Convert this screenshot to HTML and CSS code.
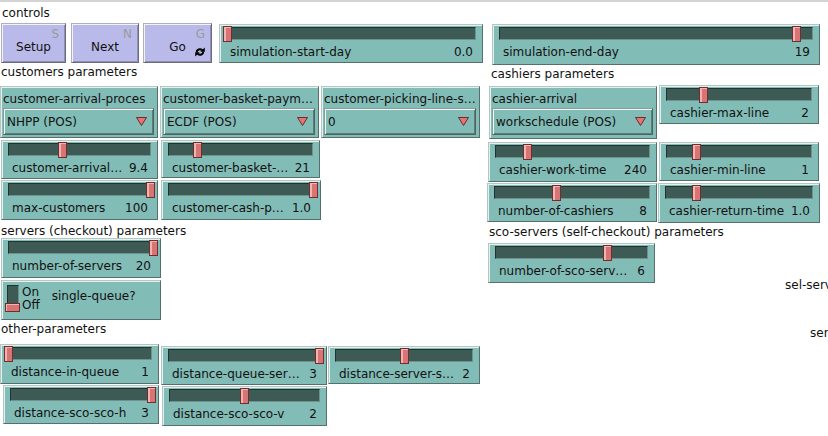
FILE: index.html
```html
<!DOCTYPE html>
<html lang="en">
<head>
    <meta charset="UTF-8">
    <title>Interface</title>
    <link rel="stylesheet" href="styles.css">
</head>
<body>
    <div class="iface">
        <!-- notes -->
        <div class="note n-controls">controls</div>
        <div class="note n-customers">customers parameters</div>
        <div class="note n-cashiers">cashiers parameters</div>
        <div class="note n-servers">servers (checkout) parameters</div>
        <div class="note n-sco">sco-servers (self-checkout) parameters</div>
        <div class="note n-other">other-parameters</div>
        <div class="note n-sel">sel-servers</div>
        <div class="note n-ser">servers</div>

        <!-- buttons -->
        <div class="button w-setup"><span class="key">S</span>Setup</div>
        <div class="button w-next"><span class="key">N</span>Next</div>
        <div class="button w-go">
            <span class="key">G</span>Go
            <svg class="forever" viewBox="0 0 10 10" width="10" height="10">
                <path d="M1.8 5.4 C1.6 2.6 5 1.2 7.4 3.2" stroke="#000" stroke-width="2" fill="none"/>
                <polygon points="5.2,4.8 9.8,4.8 9.8,0.4" fill="#000"/>
                <path d="M8.2 4.6 C8.4 7.4 5 8.8 2.6 6.8" stroke="#000" stroke-width="2" fill="none"/>
                <polygon points="4.8,5.2 0.2,5.2 0.2,9.6" fill="#000"/>
            </svg>
        </div>

        <div class="widget slider w-start-day">
            <div class="track"><span class="thumb" style="--v: 0"></span></div>
            <div class="readout"><span>simulation-start-day</span><span>0.0</span></div>
        </div>
        <div class="widget slider w-end-day">
            <div class="track"><span class="thumb" style="--v: 0.95"></span></div>
            <div class="readout"><span>simulation-end-day</span><span>19</span></div>
        </div>

        <!-- customers -->
        <div class="widget chooser w-arrival-proc">
            <div class="chooser-name">customer-arrival-proces</div>
            <div class="choice"><span>NHPP (POS)</span><svg class="arrow" viewBox="0 0 11 9" width="11" height="9"><polygon points="0.5,0.5 10.5,0.5 5.5,8.5"/></svg></div>
        </div>
        <div class="widget chooser w-basket-pay">
            <div class="chooser-name">customer-basket-paym…</div>
            <div class="choice"><span>ECDF (POS)</span><svg class="arrow" viewBox="0 0 11 9" width="11" height="9"><polygon points="0.5,0.5 10.5,0.5 5.5,8.5"/></svg></div>
        </div>
        <div class="widget chooser w-picking">
            <div class="chooser-name">customer-picking-line-s…</div>
            <div class="choice"><span>0</span><svg class="arrow" viewBox="0 0 11 9" width="11" height="9"><polygon points="0.5,0.5 10.5,0.5 5.5,8.5"/></svg></div>
        </div>

        <div class="widget slider w-arrival-rate">
            <div class="track"><span class="thumb" style="--v: 0.378"></span></div>
            <div class="readout"><span>customer-arrival…</span><span>9.4</span></div>
        </div>
        <div class="widget slider w-basket-size">
            <div class="track"><span class="thumb" style="--v: 0.198"></span></div>
            <div class="readout"><span>customer-basket-…</span><span>21</span></div>
        </div>
        <div class="widget slider w-max-customers">
            <div class="track"><span class="thumb" style="--v: 1"></span></div>
            <div class="readout"><span>max-customers</span><span>100</span></div>
        </div>
        <div class="widget slider w-cash-p">
            <div class="track"><span class="thumb" style="--v: 1"></span></div>
            <div class="readout"><span>customer-cash-p…</span><span>1.0</span></div>
        </div>

        <!-- cashiers -->
        <div class="widget chooser w-cashier-arrival">
            <div class="chooser-name">cashier-arrival</div>
            <div class="choice"><span>workschedule (POS)</span><svg class="arrow" viewBox="0 0 11 9" width="11" height="9"><polygon points="0.5,0.5 10.5,0.5 5.5,8.5"/></svg></div>
        </div>
        <div class="widget slider w-max-line">
            <div class="track"><span class="thumb" style="--v: 0.252"></span></div>
            <div class="readout"><span>cashier-max-line</span><span>2</span></div>
        </div>
        <div class="widget slider w-work-time">
            <div class="track"><span class="thumb" style="--v: 0.209"></span></div>
            <div class="readout"><span>cashier-work-time</span><span>240</span></div>
        </div>
        <div class="widget slider w-min-line">
            <div class="track"><span class="thumb" style="--v: 0.208"></span></div>
            <div class="readout"><span>cashier-min-line</span><span>1</span></div>
        </div>
        <div class="widget slider w-cashiers">
            <div class="track"><span class="thumb" style="--v: 0.4"></span></div>
            <div class="readout"><span>number-of-cashiers</span><span>8</span></div>
        </div>
        <div class="widget slider w-return-time">
            <div class="track"><span class="thumb" style="--v: 0.21"></span></div>
            <div class="readout"><span>cashier-return-time</span><span>1.0</span></div>
        </div>

        <!-- servers -->
        <div class="widget slider w-servers">
            <div class="track"><span class="thumb" style="--v: 1"></span></div>
            <div class="readout"><span>number-of-servers</span><span>20</span></div>
        </div>
        <div class="widget switch w-single-queue">
            <div class="toggle"><span class="toggle-thumb"></span></div>
            <div class="onoff">On<br>Off</div>
            <div class="switch-name">single-queue?</div>
        </div>

        <div class="widget slider w-sco">
            <div class="track"><span class="thumb" style="--v: 0.74"></span></div>
            <div class="readout"><span>number-of-sco-serv…</span><span>6</span></div>
        </div>

        <!-- other -->
        <div class="widget slider w-in-queue">
            <div class="track"><span class="thumb" style="--v: 0"></span></div>
            <div class="readout"><span>distance-in-queue</span><span>1</span></div>
        </div>
        <div class="widget slider w-queue-ser">
            <div class="track"><span class="thumb" style="--v: 1"></span></div>
            <div class="readout"><span>distance-queue-ser…</span><span>3</span></div>
        </div>
        <div class="widget slider w-server-s">
            <div class="track"><span class="thumb" style="--v: 0.5"></span></div>
            <div class="readout"><span>distance-server-s…</span><span>2</span></div>
        </div>
        <div class="widget slider w-sco-h">
            <div class="track"><span class="thumb" style="--v: 1"></span></div>
            <div class="readout"><span>distance-sco-sco-h</span><span>3</span></div>
        </div>
        <div class="widget slider w-sco-v">
            <div class="track"><span class="thumb" style="--v: 0.5"></span></div>
            <div class="readout"><span>distance-sco-sco-v</span><span>2</span></div>
        </div>
    </div>
</body>
</html>
```

FILE: styles.css
```css
* {
    box-sizing: border-box;
}
body {
    margin: 0;
    background: #fff;
    font-family: 'DejaVu Sans', 'Liberation Sans', sans-serif;
    font-size: 12px;
    color: #111;
}
.iface {
    position: relative;
    width: 828px;
    height: 436px;
    overflow: hidden;
}
.iface::before {
    content: '';
    position: absolute;
    top: 0;
    left: 0;
    right: 0;
    height: 2px;
    background: #d4d4d4;
}

/* notes */
.note {
    position: absolute;
    line-height: 14px;
    white-space: nowrap;
}
.n-controls { left: 2px; top: 6px; }
.n-customers { left: 1px; top: 65px; }
.n-cashiers { left: 491px; top: 67px; }
.n-servers { left: 1px; top: 224px; }
.n-sco { left: 489px; top: 225px; }
.n-other { left: 1px; top: 322px; }
.n-sel { left: 785px; top: 278px; }
.n-ser { left: 810px; top: 326px; }

/* generic widget box */
.widget {
    position: absolute;
    background: #82bcb7;
    border: 1px solid;
    border-color: #b4c6c3 #55706c #55706c #b4c6c3;
    box-shadow: inset 1px 1px 0 #e2f0ee;
    white-space: nowrap;
}

/* buttons */
.button {
    position: absolute;
    height: 40px;
    background: #babaea;
    border: 1px solid;
    border-color: #b0b0b8 #6a6a80 #6a6a80 #b0b0b8;
    box-shadow: inset 1px 1px 0 #f2f2ff, inset -1px -1px 0 #9090b4;
    padding-top: 16px;
    line-height: 14px;
    text-align: center;
}
.button .key {
    position: absolute;
    top: 3px;
    right: 6px;
    color: #9a9a9a;
}
.button .forever {
    position: absolute;
    right: 6px;
    bottom: 5px;
}

/* sliders */
.slider {
    height: 40px;
    padding-top: 2px;
}
.track {
    position: relative;
    height: 13px;
    margin: 0 6px;
    background: #3e5a55;
    border: 1px solid;
    border-color: #22322f #6f918b #6f918b #22322f;
}
.thumb {
    position: absolute;
    top: -2px;
    left: calc(var(--v) * 100% - 4.5px);
    width: 9px;
    height: 16px;
    background: #d97474;
    border: 1px solid #6c3030;
    box-shadow: inset 2px 1px 0 #f2b3b3;
}
.readout {
    display: flex;
    justify-content: space-between;
    margin-top: 5px;
    padding: 0 9px 0 10px;
    line-height: 14px;
}

/* choosers */
.chooser {
    padding: 5px 3px 0 2px;
}
.chooser-name {
    line-height: 14px;
}
.choice {
    display: flex;
    align-items: center;
    justify-content: space-between;
    height: 27px;
    margin-top: 2px;
    padding: 0 6px 0 3px;
    line-height: 14px;
    border: 1px solid;
    border-color: #8a9c99 #4d6561 #4d6561 #8a9c99;
    box-shadow: inset 1px 1px 0 #eef7f6, inset -1px -1px 0 #5f7c77;
}
.arrow polygon {
    fill: #e07676;
    stroke: #6c2a2a;
    stroke-width: 1;
}

/* switch */
.switch {
    display: flex;
    align-items: flex-start;
}
.toggle {
    position: relative;
    width: 15px;
    height: 29px;
    margin: 3px 0 0 3px;
}
.toggle::before {
    content: '';
    position: absolute;
    left: 2px;
    top: 1px;
    width: 10px;
    height: 21px;
    background: #3e5a55;
    border: 1px solid;
    border-color: #22322f #6f918b #6f918b #22322f;
}
.toggle-thumb {
    position: absolute;
    left: 0;
    top: 19px;
    width: 15px;
    height: 9px;
    background: #d97474;
    border: 1px solid #6c3030;
    box-shadow: inset 1px 1px 0 #f2b3b3;
}
.onoff {
    margin: 5px 0 0 2px;
    line-height: 13px;
}
.switch-name {
    margin: 8px 0 0 12px;
    line-height: 14px;
}

/* widget placement on the interface canvas */
.w-setup { left: 1px; top: 23px; width: 65px; }
.w-next { left: 71px; top: 23px; width: 68px; }
.w-go { left: 143px; top: 23px; width: 69px; }
.w-start-day { left: 219px; top: 24px; width: 264px; height: 39px; }
.w-end-day { left: 492px; top: 24px; width: 328px; height: 41px; }

.w-arrival-proc { left: 0; top: 86px; width: 158px; height: 52px; }
.w-basket-pay { left: 160px; top: 86px; width: 159px; height: 52px; }
.w-picking { left: 321px; top: 86px; width: 159px; height: 52px; }
.w-arrival-rate { left: 1px; top: 140px; width: 157px; height: 39px; }
.w-basket-size { left: 161px; top: 140px; width: 159px; height: 38px; }
.w-max-customers { left: 1px; top: 180px; width: 157px; }
.w-cash-p { left: 161px; top: 180px; width: 160px; }

.w-cashier-arrival { left: 489px; top: 86px; width: 168px; height: 53px; }
.w-max-line { left: 659px; top: 85px; width: 160px; height: 39px; }
.w-work-time { left: 488px; top: 142px; width: 169px; }
.w-min-line { left: 659px; top: 142px; width: 160px; height: 39px; }
.w-cashiers { left: 487px; top: 183px; width: 170px; height: 39px; }
.w-return-time { left: 658px; top: 183px; width: 162px; }

.w-servers { left: 1px; top: 238px; width: 160px; }
.w-single-queue { left: 1px; top: 280px; width: 160px; height: 40px; }
.w-sco { left: 488px; top: 243px; width: 167px; }

.w-in-queue { left: 0; top: 344px; width: 159px; }
.w-queue-ser { left: 161px; top: 346px; width: 166px; height: 39px; }
.w-server-s { left: 328px; top: 346px; width: 152px; height: 38px; }
.w-sco-h { left: 3px; top: 385px; width: 156px; height: 39px; }
.w-sco-v { left: 162px; top: 386px; width: 165px; }
```
